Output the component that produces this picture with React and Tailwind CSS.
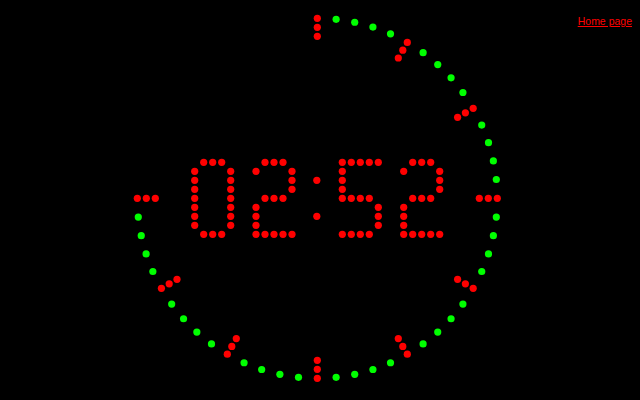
import React from 'react'

const CX = 317.3
const CY = 198.3
const SECONDS = 45

const GLYPHS = {
  '0': ['.###.', '#...#', '#...#', '#...#', '#...#', '#...#', '#...#', '#...#', '.###.'],
  '2': ['.###.', '#...#', '....#', '....#', '.###.', '#....', '#....', '#....', '#####'],
  '5': ['#####', '#....', '#....', '#....', '####.', '....#', '....#', '....#', '####.'],
}

function Digit({ ch, x, y }) {
  const dots = []
  GLYPHS[ch].forEach((row, r) => {
    row.split('').forEach((c, k) => {
      if (c === '#') dots.push(<circle key={r + '-' + k} cx={x + k * 9} cy={y + r * 9} r="3.6" fill="#ff0000" />)
    })
  })
  return <g>{dots}</g>
}

function Ring() {
  const dots = []
  for (let i = 0; i < 60; i++) {
    if (i > SECONDS) continue
    const a = (i * 6 * Math.PI) / 180
    const sx = Math.sin(a)
    const cy = Math.cos(a)
    if (i % 5 === 0) {
      ;[180, 171, 162].forEach((rad) => {
        dots.push(<circle key={i + '-' + rad} cx={CX + rad * sx} cy={CY - rad * cy} r="3.6" fill="#ff0000" />)
      })
    } else {
      dots.push(<circle key={i} cx={CX + 180 * sx} cy={CY - 180 * cy} r="3.6" fill="#00ff00" />)
    }
  }
  return <g>{dots}</g>
}

export default function App() {
  return (
    <div className="relative w-[640px] h-[400px] bg-black overflow-hidden">
      <svg className="absolute inset-0" width="640" height="400" viewBox="0 0 640 400">
        <Ring />
        <Digit ch="0" x={194.7} y={162.3} />
        <Digit ch="2" x={256} y={162.3} />
        <circle cx={316.8} cy={180.3} r="3.6" fill="#ff0000" />
        <circle cx={316.8} cy={216.3} r="3.6" fill="#ff0000" />
        <Digit ch="5" x={342.3} y={162.3} />
        <Digit ch="2" x={403.7} y={162.3} />
      </svg>
      <div className="relative flex justify-end pt-[14px] pr-[8px]">
        <a href="#" className="font-['Liberation_Sans',_Arial,_sans-serif] text-[10.5px] leading-[15px] text-[#ff0000] underline">
          Home page
        </a>
      </div>
    </div>
  )
}
